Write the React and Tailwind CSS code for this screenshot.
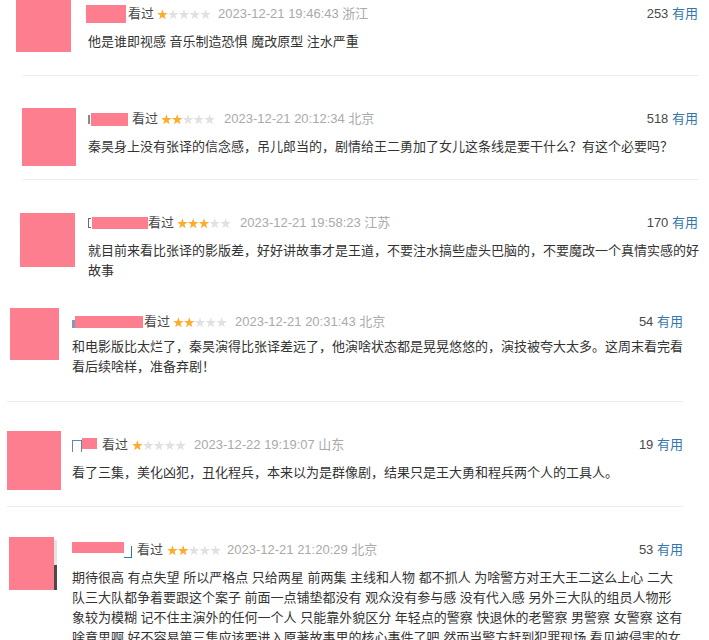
import React from "react";

const STAR =
  "5.4,0.3 6.69,4.02 10.63,4.1 7.49,6.48 8.63,10.25 5.4,8 2.17,10.25 3.31,6.48 0.17,4.1 4.11,4.02";

function Stars({ n }) {
  return (
    <svg width="54" height="11" viewBox="0 0 54 11" className="block">
      {[0, 1, 2, 3, 4].map((i) => (
        <polygon
          key={i}
          points={STAR}
          transform={`translate(${i * 10.8} 0)`}
          fill={i < n ? "#ffac2d" : "#e1e1e1"}
        />
      ))}
    </svg>
  );
}

function Header({ pre, box, post, kan, starsCls, dateCls, n, date, loc, votes }) {
  return (
    <div className="flex h-[20px] items-center text-[13px] leading-[20px]">
      {pre}
      <span className={box} />
      {post}
      <span className={kan}>看过</span>
      <span className={starsCls}>
        <Stars n={n} />
      </span>
      <span className={dateCls}>
        {date} {loc}
      </span>
      <span className="ml-auto whitespace-nowrap">
        <span className="text-[#494949]">{votes}</span>{" "}
        <span className="text-[#3377aa]">有用</span>
      </span>
    </div>
  );
}

export default function App() {
  return (
    <div className="h-[640px] overflow-hidden bg-white font-['Liberation_Sans','Noto_Sans_CJK_SC',sans-serif]">
      {/* Item 1 */}
      <div className="flex h-[75px] items-start">
        <div className="ml-[16px] h-[52px] w-[55px] shrink-0 bg-[#fd7f8f]" />
        <div className="ml-[17px] mt-[4px] w-[610px] shrink-0">
          <Header
            box="-ml-[2px] h-[18px] w-[40px] bg-[#fd7f8f]"
            kan="ml-[2px] text-[#494949]"
            starsCls="ml-[3px]"
            dateCls="ml-[7px] text-[#aaaaaa]"
            n={1}
            date="2023-12-21 19:46:43"
            loc="浙江"
            votes="253"
          />
          <p className="mt-[8px] whitespace-nowrap text-[13px] leading-[20px] text-[#333]">
            他是谁即视感 音乐制造恐惧 魔改原型 注水严重
          </p>
        </div>
      </div>
      <div className="ml-[23px] h-px w-[675px] bg-[#ebebeb]" />

      {/* Item 2 */}
      <div className="flex h-[103px] items-start pt-[32px]">
        <div className="ml-[22px] h-[58px] w-[54px] shrink-0 bg-[#fd7f8f]" />
        <div className="ml-[12px] mt-[1px] w-[610px] shrink-0">
          <Header
            pre={<span className="mr-[1px] h-[9px] w-[2px] bg-[#8a8a8a]" />}
            box="h-[13px] w-[37px] bg-[#fd7f8f]"
            kan="ml-[4px] text-[#494949]"
            starsCls="ml-[3px]"
            dateCls="ml-[9px] text-[#aaaaaa]"
            n={2}
            date="2023-12-21 20:12:34"
            loc="北京"
            votes="518"
          />
          <p className="mt-[8px] whitespace-nowrap text-[13px] leading-[20px] text-[#333]">
            秦昊身上没有张译的信念感，吊儿郎当的，剧情给王二勇加了女儿这条线是要干什么？有这个必要吗？
          </p>
        </div>
      </div>
      <div className="ml-[23px] h-px w-[675px] bg-[#ebebeb]" />

      {/* Item 3 */}
      <div className="flex h-[124px] items-start pt-[33px]">
        <div className="ml-[20px] h-[54px] w-[55px] shrink-0 bg-[#fd7f8f]" />
        <div className="ml-[13px] w-[610px] shrink-0">
          <Header
            pre={<span className="mr-[1px] h-[10px] w-[3px] border border-r-0 border-[#6a6a6a]" />}
            box="h-[12px] w-[56px] bg-[#fd7f8f]"
            kan="text-[#494949]"
            starsCls="ml-[3px]"
            dateCls="ml-[9px] text-[#aaaaaa]"
            n={3}
            date="2023-12-21 19:58:23"
            loc="江苏"
            votes="170"
          />
          <p className="mt-[8px] whitespace-nowrap text-[13px] leading-[20px] text-[#333]">
            就目前来看比张译的影版差，好好讲故事才是王道，不要注水搞些虚头巴脑的，不要魔改一个真情实感的好
            <br />
            故事
          </p>
        </div>
      </div>

      {/* Item 4 */}
      <div className="flex h-[97px] items-start pt-[4px]">
        <div className="ml-[10px] h-[52px] w-[49px] shrink-0 bg-[#fd7f8f]" />
        <div className="ml-[13px] mt-[4px] w-[611px] shrink-0">
          <Header
            pre={<span className="mt-[4px] h-[8px] w-[3px] bg-[#7f9bb8]" />}
            box="h-[12px] w-[68px] bg-[#fd7f8f]"
            kan="ml-[1px] text-[#494949]"
            starsCls="ml-[3px]"
            dateCls="ml-[8px] text-[#aaaaaa]"
            n={2}
            date="2023-12-21 20:31:43"
            loc="北京"
            votes="54"
          />
          <p className="mt-[5px] whitespace-nowrap text-[13px] leading-[20px] text-[#333]">
            和电影版比太烂了，秦昊演得比张译差远了，他演啥状态都是晃晃悠悠的，演技被夸大太多。这周末看完看
            <br />
            看后续啥样，准备弃剧！
          </p>
        </div>
      </div>
      <div className="ml-[7px] h-px w-[676px] bg-[#ebebeb]" />

      {/* Item 5 */}
      <div className="flex h-[104px] items-start pt-[29px]">
        <div className="ml-[7px] h-[59px] w-[54px] shrink-0 bg-[#fd7f8f]" />
        <div className="ml-[11px] mt-[4px] w-[611px] shrink-0">
          <Header
            pre={<span className="mt-[1px] h-[12px] w-[10px] border-t border-l border-r border-[#5d86b0]" />}
            box="-mt-[4px] h-[11px] w-[15px] bg-[#fd7f8f]"
            kan="ml-[5px] text-[#494949]"
            starsCls="ml-[4px]"
            dateCls="ml-[8px] text-[#aaaaaa]"
            n={1}
            date="2023-12-22 19:19:07"
            loc="山东"
            votes="19"
          />
          <p className="mt-[8px] whitespace-nowrap text-[13px] leading-[20px] text-[#333]">
            看了三集，美化凶犯，丑化程兵，本来以为是群像剧，结果只是王大勇和程兵两个人的工具人。
          </p>
        </div>
      </div>
      <div className="ml-[7px] h-px w-[676px] bg-[#ebebeb]" />

      {/* Item 6 */}
      <div className="flex items-start pt-[30px]">
        <div className="ml-[9px] flex h-[53px] w-[48px] shrink-0">
          <div className="h-full w-[45px] bg-[#fd7f8f]" />
          <div className="flex w-[3px] flex-col">
            <div className="mt-[3px] h-[25px] bg-[#e4e4e4]" />
            <div className="h-[25px] bg-[#4a4a4a]" />
          </div>
        </div>
        <div className="ml-[15px] mt-[3px] w-[611px] shrink-0">
          <Header
            box="-mt-[5px] h-[11px] w-[52px] bg-[#fd7f8f]"
            post={
              <span className="mt-[3px] h-[12px] w-[8px] border-b border-r border-[#3377aa]" />
            }
            kan="ml-[5px] text-[#494949]"
            starsCls="ml-[4px]"
            dateCls="ml-[6px] text-[#aaaaaa]"
            n={2}
            date="2023-12-21 21:20:29"
            loc="北京"
            votes="53"
          />
          <p className="mt-[8px] whitespace-nowrap text-[13px] leading-[20px] text-[#333]">
            期待很高 有点失望 所以严格点 只给两星 前两集 主线和人物 都不抓人 为啥警方对王大王二这么上心 二大
            <br />
            队三大队都争着要跟这个案子 前面一点铺垫都没有 观众没有参与感 没有代入感 另外三大队的组员人物形
            <br />
            象较为模糊 记不住主演外的任何一个人 只能靠外貌区分 年轻点的警察 快退休的老警察 男警察 女警察 这有
            <br />
            啥意思啊 好不容易第三集应该要进入原著故事里的核心事件了吧 然而当警方赶到犯罪现场 看见被侵害的女
          </p>
        </div>
      </div>
    </div>
  );
}
